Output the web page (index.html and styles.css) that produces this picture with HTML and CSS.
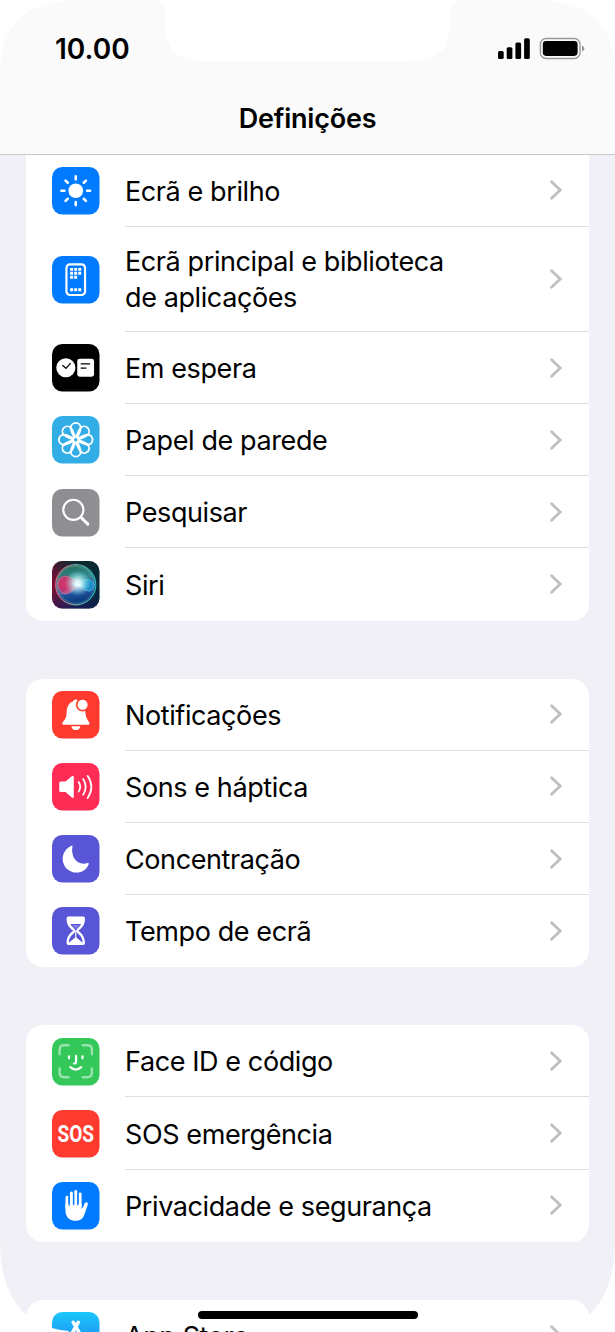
FILE: index.html
```html
<!DOCTYPE html>
<html lang="pt">
<head>
<meta charset="utf-8">
<title>Definições</title>
<link rel="stylesheet" href="styles.css">
</head>
<body>
<svg width="0" height="0" class="defs">
  <symbol id="chev" viewBox="0 0 13 20"><path d="M1.6 1.8 10.2 10 1.6 18.2" fill="none" stroke="#bfbfc1" stroke-width="2.8" stroke-linecap="round" stroke-linejoin="miter"/></symbol>
</svg>
<div class="screen">
  <header class="top">
    <div class="status">
      <span class="time">10.00</span>
      <svg class="indicators" width="88" height="24" viewBox="0 0 88 24">
        <rect x="0" y="14" width="5.7" height="8" rx="1.5"/>
        <rect x="8.7" y="10.2" width="5.7" height="11.8" rx="1.5"/>
        <rect x="17.4" y="5.6" width="5.7" height="16.4" rx="1.5"/>
        <rect x="26.1" y="1.2" width="5.7" height="20.8" rx="1.5"/>
        <rect x="42.4" y="1.5" width="39.6" height="20" rx="5.6" fill="none" stroke="#999" stroke-width="1.4"/>
        <rect x="44.8" y="4" width="34.8" height="14.9" rx="3.3"/>
        <path d="M84 8.500Q86.400 9.300 86.400 11.500T84 14.600Z" fill="#999"/>
      </svg>
    </div>
    <h1 class="title">Definições</h1>
  </header>
  <main class="list">
    <section class="group first">
      <div class="row">
        <svg class="icon" viewBox="0 0 48 48"><rect width="48" height="48" rx="10.5" fill="#007aff"/><circle cx="24" cy="24" r="7.4" fill="#fff"/><g stroke="#fff" stroke-width="2.6" stroke-linecap="round"><path d="M24 9.5v3M24 35.5v3M9.5 24h3M35.5 24h3M13.7 13.7l2.2 2.2M32.1 32.1l2.2 2.2M34.3 13.7l-2.2 2.2M15.9 32.1l-2.2 2.2"/></g></svg>
        <div class="cell"><span class="label">Ecrã e brilho</span><svg class="chev"><use href="#chev"/></svg></div>
      </div>
      <div class="row tall">
        <svg class="icon" viewBox="0 0 48 48"><rect width="48" height="48" rx="10.5" fill="#007aff"/><rect x="14.6" y="8.4" width="18.8" height="31" rx="3.6" fill="none" stroke="#fff" stroke-width="2.2"/><g fill="#fff"><path d="M18.300 12h3v3h-3zM22.400 12h3v3h-3zM26.500 12h3v3h-3zM18.300 16h3v3h-3zM22.400 16h3v3h-3zM26.500 16h3v3h-3zM18.300 20h3v3h-3zM22.400 20h3v3h-3zM18.300 32.500h3v3h-3zM22.400 32.500h3v3h-3zM26.500 32.500h3v3h-3z"/></g></svg>
        <div class="cell"><span class="label">Ecrã principal e biblioteca<br>de aplicações</span><svg class="chev"><use href="#chev"/></svg></div>
      </div>
      <div class="row">
        <svg class="icon" viewBox="0 0 48 48"><rect width="48" height="48" rx="10.5"/><circle cx="14" cy="24" r="9.7" fill="#fff"/><path d="M10.8 21.8l3.4 2.8 4.3-5" fill="none" stroke="#000" stroke-width="1.3" stroke-linecap="round"/><rect x="25.5" y="15" width="17" height="18" rx="2.5" fill="#fff"/><path d="M29 20h9.500M29 24.300h5.800" stroke="#000" stroke-width="1.3"/></svg>
        <div class="cell"><span class="label">Em espera</span><svg class="chev"><use href="#chev"/></svg></div>
      </div>
      <div class="row">
        <svg class="icon" viewBox="0 0 48 48"><defs><path id="petal" d="M24 26.500C22.500 20.500 19 15.800 19 12A5 5 0 0 1 29 12C29 15.800 25.500 20.500 24 26.500Z"/></defs><rect width="48" height="48" rx="10.5" fill="#32ade6"/><g fill="none" stroke="#fff" stroke-width="1.9"><use href="#petal"/><use href="#petal" transform="rotate(45 24 24)"/><use href="#petal" transform="rotate(90 24 24)"/><use href="#petal" transform="rotate(135 24 24)"/><use href="#petal" transform="rotate(180 24 24)"/><use href="#petal" transform="rotate(225 24 24)"/><use href="#petal" transform="rotate(270 24 24)"/><use href="#petal" transform="rotate(315 24 24)"/></g><circle cx="24" cy="24" r="2.6" fill="#32ade6" stroke="#fff" stroke-width="1.7"/></svg>
        <div class="cell"><span class="label">Papel de parede</span><svg class="chev"><use href="#chev"/></svg></div>
      </div>
      <div class="row">
        <svg class="icon" viewBox="0 0 48 48"><rect width="48" height="48" rx="10.5" fill="#8e8e93"/><circle cx="21.6" cy="21" r="10.2" fill="none" stroke="#fff" stroke-width="2.1"/><path d="M29.200 28.500l7 7" stroke="#fff" stroke-width="2.9" stroke-linecap="round"/></svg>
        <div class="cell"><span class="label">Pesquisar</span><svg class="chev"><use href="#chev"/></svg></div>
      </div>
      <div class="row">
        <svg class="icon" viewBox="0 0 48 48">
          <defs>
            <linearGradient id="sbg"><stop offset="0" stop-color="#8b0b35"/><stop offset=".5" stop-color="#143449"/><stop offset="1" stop-color="#04293a"/></linearGradient>
            <linearGradient id="sdark" x2="0" y2="1"><stop offset="0" stop-color="#0b2420" stop-opacity=".6"/><stop offset=".5" stop-color="#0b2432" stop-opacity="0"/><stop offset="1" stop-color="#1a1560" stop-opacity=".65"/></linearGradient>
            <linearGradient id="orb" x2=".25" y2="1"><stop offset="0" stop-color="#1d6550"/><stop offset=".45" stop-color="#328a90"/><stop offset=".7" stop-color="#275aa4"/><stop offset="1" stop-color="#0a3c80"/></linearGradient>
            <linearGradient id="ring"><stop offset="0" stop-color="#e56582"/><stop offset=".5" stop-color="#77a5a2"/><stop offset="1" stop-color="#22b9b4"/></linearGradient>
            <radialGradient id="pink"><stop offset="0" stop-color="#d9346c"/><stop offset=".6" stop-color="#c62f62" stop-opacity=".7"/><stop offset="1" stop-color="#a02860" stop-opacity="0"/></radialGradient>
            <radialGradient id="glow"><stop offset="0" stop-color="#fff"/><stop offset=".25" stop-color="#eff" stop-opacity=".85"/><stop offset="1" stop-color="#8ff" stop-opacity="0"/></radialGradient>
          </defs>
          <rect width="48" height="48" rx="10.5" fill="url(#sbg)"/><rect width="48" height="48" rx="10.5" fill="url(#sdark)"/>
          <circle cx="24" cy="24" r="20.3" fill="url(#orb)" stroke="url(#ring)" stroke-width="1.1"/>
          <circle cx="13.500" cy="23" r="10" fill="url(#pink)"/>
          <circle cx="24" cy="24" r="18.6" fill="none" stroke="#8fb5a8" stroke-opacity=".45" stroke-width=".8"/>
          <path d="M27 24C19 15 14 14 9 17 3 22 6 31 12 33 18 34 22 28 27 24Z" fill="#dc3269" fill-opacity=".6" stroke="#ef8ba7" stroke-width=".5"/>
          <path d="M25 23C32 18 38 17 42 22 44 27 40 32 35 30 31 29 29 26 25 23Z" fill="#20a1d8" fill-opacity=".7" stroke="#64d4ee" stroke-width=".5"/>
          <path d="M6 33C17 36 23 30 28 25L36 37C31 30 27 26 25 25Z" fill="#e37ca8" fill-opacity=".35"/>
          <circle cx="26" cy="22.500" r="13" fill="url(#glow)"/><ellipse cx="26" cy="24" rx="7" ry="2.600" transform="rotate(14 26 24)" fill="url(#glow)"/>
        </svg>
        <div class="cell"><span class="label">Siri</span><svg class="chev"><use href="#chev"/></svg></div>
      </div>
    </section>
    <section class="group">
      <div class="row">
        <svg class="icon" viewBox="0 0 48 48"><rect width="48" height="48" rx="10.5" fill="#ff3b30"/><path d="M11.5 34Q9.7 33.5 11 31.2L13.5 28Q14.7 26 14.8 22C14.8 14.5 18.3 11.5 21 10.6Q22.2 8.6 24 8.7Q26 8.6 27 10.6C33.2 12.5 33.6 18.5 33.8 22Q34 26 35.3 28L37.3 31.2Q38.6 33.5 36.700 34ZM19.500 35.500h9.200q-1 4-4.600 4t-4.600-4Z" fill="#fff"/><circle cx="30.9" cy="14" r="6.8" fill="#ff3b30"/><circle cx="30.9" cy="14" r="5.1" fill="#fff"/></svg>
        <div class="cell"><span class="label">Notificações</span><svg class="chev"><use href="#chev"/></svg></div>
      </div>
      <div class="row">
        <svg class="icon" viewBox="0 0 48 48"><rect width="48" height="48" rx="10.5" fill="#ff2d55"/><path d="M9 18.8h4.7L20 13.3q2-1.3 2 .8v20q0 2-2 .8l-6.300-5.500H9q-1.700 0-1.700-1.700v-7.200Q7.300 18.800 9 18.800Z" fill="#fff"/><g fill="none" stroke="#fff" stroke-width="1.8" stroke-linecap="round"><path d="M27 19.300q3 4.700 0 9.600M31.500 16.200q5 7.900 0 15.800M36 13q7.500 11 0 22.500"/></g></svg>
        <div class="cell"><span class="label">Sons e háptica</span><svg class="chev"><use href="#chev"/></svg></div>
      </div>
      <div class="row">
        <svg class="icon" viewBox="0 0 48 48"><rect width="48" height="48" rx="10.5" fill="#5856d6"/><path d="M20.7 11.2C18.6 22.5 25.2 31.2 36 28.4Q37.9 28 36.9 30C34.8 35 30 38.1 24.7 38C17.1 38 10.8 31.8 10.8 24.2C10.8 18.2 14.5 13.1 19.7 10.9Q20.9 10.3 20.7 11.2Z" fill="#fff"/></svg>
        <div class="cell"><span class="label">Concentração</span><svg class="chev"><use href="#chev"/></svg></div>
      </div>
      <div class="row">
        <svg class="icon" viewBox="0 0 48 48"><rect width="48" height="48" rx="10.5" fill="#5856d6"/><path d="M16.500 9.500h15q1.800 0 1.800 2C33.300 18 30.500 21 26.500 24 30.500 27 33.300 30 33.300 36.500q0 2-1.800 2h-15q-1.800 0-1.800-2C14.700 30 17.500 27 21.500 24 17.500 21 14.700 18 14.700 11.500q0-2 1.800-2Z" fill="#fff"/><path d="M18.500 17.300h11Q28.500 19.400 26.100 21.200 24.700 22.200 24.700 24t1.400 2.800C29.500 29.500 30.700 31.800 31 36L24.600 30.800V23.500H23.400V30.800L17 36C17.300 31.800 18.500 29.500 21.900 26.800Q23.300 25.800 23.300 24T21.900 21.200Q19.500 19.400 18.500 17.300Z" fill="#5856d6"/><path d="M20.500 18.300h7L24 22Z" fill="#fff" fill-opacity=".25"/></svg>
        <div class="cell"><span class="label">Tempo de ecrã</span><svg class="chev"><use href="#chev"/></svg></div>
      </div>
    </section>
    <section class="group">
      <div class="row">
        <svg class="icon" viewBox="0 0 48 48"><rect width="48" height="48" rx="10.5" fill="#34c759"/><g fill="none" stroke="#fff" stroke-width="2.5" stroke-linecap="round"><path opacity=".5" d="M7.700 16.300v-4.500q0-4.400 4.400-4.400h4.700M31.200 7.400h4.700q4.400 0 4.400 4.400v4.500M7.700 30.700v4.500q0 4.400 4.400 4.400h4.700M31.200 39.600h4.700q4.400 0 4.400-4.400v-4.500"/><path d="M17.200 18.500v2M30.800 18.500v2M24.300 18v6q0 1.800-2 1.800M18.500 29.500q5.500 4.700 11 0" stroke-width="2.2"/></g></svg>
        <div class="cell"><span class="label">Face ID e código</span><svg class="chev"><use href="#chev"/></svg></div>
      </div>
      <div class="row">
        <svg class="icon" viewBox="0 0 48 48"><rect width="48" height="48" rx="10.5" fill="#ff3b30"/><text class="sos" x="24" y="32.2" text-anchor="middle" textLength="37" lengthAdjust="spacingAndGlyphs">SOS</text></svg>
        <div class="cell"><span class="label">SOS emergência</span><svg class="chev"><use href="#chev"/></svg></div>
      </div>
      <div class="row">
        <svg class="icon" viewBox="0 0 48 48"><rect width="48" height="48" rx="10.5" fill="#007aff"/><path d="M15.100 26V15.500M19.600 24V11M24 24V9.500M28.400 24V12" fill="none" stroke="#fff" stroke-width="3" stroke-linecap="round"/><path d="M13.600 22H29.900V27.200Q31.300 26 32.200 23.500L33.200 21.200Q34.200 20 35.500 20.800 36.700 21.400 36.100 23.100L32.500 33.500Q30.200 39.200 24 39.200C17.300 39.200 13.600 35 13.600 28.500Z" fill="#fff"/><path d="M17.350 15v9M21.800 12v11.500M26.200 12v11.500" stroke="#007aff" stroke-width="1.2"/></svg>
        <div class="cell"><span class="label">Privacidade e segurança</span><svg class="chev"><use href="#chev"/></svg></div>
      </div>
    </section>
    <section class="group">
      <div class="row">
        <svg class="icon" viewBox="0 0 48 48"><defs><linearGradient id="store" x2="0" y2="1"><stop offset="0" stop-color="#1bc8fb"/><stop offset=".45" stop-color="#1d9ff5"/><stop offset="1" stop-color="#1e70f0"/></linearGradient></defs><rect width="48" height="48" rx="10.5" fill="url(#store)"/><path d="M0 16.200Q9 19 17 19.200L15 24H0Z" fill="#fff"/><path d="M21.500 10.500 31 27M26.500 10.500 16 29" stroke="#fff" stroke-width="3.6" stroke-linecap="round"/></svg>
        <div class="cell"><span class="label">App Store</span><svg class="chev"><use href="#chev"/></svg></div>
      </div>
    </section>
  </main>
  <svg class="bezel" width="615" height="1332" viewBox="0 0 615 1332" fill="#fff">
    <path d="M0 0H80C25 0 0 25 0 75ZM615 0H535C590 0 615 25 615 75Z"/>
    <path d="M154 0C162 1 165 5 165 15V22C165 48 176 61 203 61H412C439 61 450 48 450 22V15C450 5 453 1 461 0Z"/>
    <path d="M0 1245C1 1277 10 1302 27 1315.500L50 1332H0ZM615 1245C614 1277 605 1302 588 1315.500L565 1332H615Z"/>
  </svg>
  <div class="home"></div>
</div>
</body>
</html>
```
FILE: styles.css
```css
body { margin: 0; background: #fff; }
.defs { position: absolute; }
.screen {
  position: relative;
  width: 615px;
  height: 1332px;
  overflow: hidden;
  background: #f1f0f6;
  color: #000;
  font-family: Inter, "Liberation Sans", sans-serif;
}
.top {
  box-sizing: border-box;
  height: 154.7px;
  background: #fafafa;
  border-bottom: 1px solid #c8c8ca;
}
.status {
  display: flex;
  justify-content: space-between;
  align-items: center;
  padding: 36px 29px 0 55px;
  height: 26px;
}
.time { font-size: 28px; font-weight: 600; letter-spacing: 0; line-height: 26px; }
.title {
  margin: 39px 0 0;
  font-size: 27px;
  line-height: 36px;
  font-weight: 600;
  letter-spacing: -0.2px;
  text-align: center;
}
.list {
  display: flex;
  flex-direction: column;
  gap: 58.1px;
  padding: 0 26.5px 0 26px;
}
.group { background: #fff; border-radius: 17px; }
.first { border-top-left-radius: 0; border-top-right-radius: 0; }
.row {
  display: flex;
  align-items: center;
  gap: 25.5px;
  height: 72.15px;
  padding-left: 26px;
}
.tall { height: 105.2px; }
.icon { flex: none; width: 47.5px; height: 47.5px; overflow: visible; }
.cell {
  box-sizing: border-box;
  flex: 1;
  display: flex;
  align-items: center;
  justify-content: space-between;
  height: 100%;
  padding: 3px 26px 0 0;
  border-bottom: 1px solid #dedee0;
}
.row:last-child .cell { border-bottom-color: transparent; }
.label { font-size: 27px; line-height: 36px; letter-spacing: -0.4px; white-space: nowrap; }
.chev { width: 13px; height: 20px; margin-top: -3px; }
.sos { font-family: "Roboto", sans-serif; font-size: 23.5px; font-weight: 700; fill: #fff; }
.bezel { position: absolute; inset: 0; }
.home {
  position: absolute;
  left: 198px;
  top: 1310.5px;
  width: 220px;
  height: 8.5px;
  border-radius: 5px;
  background: #000;
}
```
